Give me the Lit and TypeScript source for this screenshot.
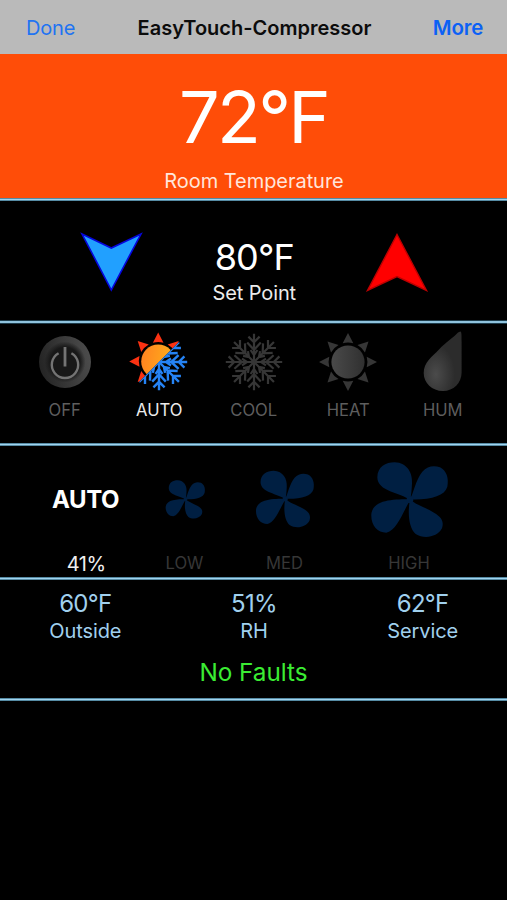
import { LitElement, html, svg, css } from "lit";
import { customElement, property, state } from "lit/decorators.js";
import { classMap } from "lit/directives/class-map.js";

const EIGHTHS = [0, 45, 90, 135, 180, 225, 270, 315];

const snowflake = (color: string, width: number) => svg`
  <g fill="none" stroke=${color} stroke-width=${width}>
    ${EIGHTHS.map((a) => svg`
      <path transform="rotate(${a})" d="M0 0V-28.2M-5.6 -25.4L0 -19.8L5.6 -25.4M-6.8 -19.6L0 -12.2L6.8 -19.600M-3.400 -12L0 -7L3.400 -12"/>`)}
  </g>`;

const sunRays = (color: string, angles: number[]) => angles.map(
  (a) => svg`<path transform="rotate(${a})" fill=${color} d="M0 -29L5.3 -18.7Q0 -20.200 -5.3 -18.7Z"/>`,
);

const icons: Record<string, () => unknown> = {
  off: () => svg`
    <defs>
      <linearGradient id="rim" x1="0" x2="1" y1=".6" y2=".4">
        <stop offset="0" stop-color="#242424"/><stop offset="1" stop-color="#4c4c4c"/>
      </linearGradient>
      <radialGradient id="well">
        <stop offset=".72" stop-color="#181818"/><stop offset="1" stop-color="#181818" stop-opacity="0"/>
      </radialGradient>
    </defs>
    <circle r="26" fill="url(#rim)"/>
    <circle r="20.5" fill="url(#well)"/>
    <path d="M-6.4 -10.8A13.2 13.2 0 1 0 6.4 -10.8" transform="translate(0 2)" fill="none" stroke="#747474" stroke-width="2.4"/>
    <path d="M0 -15V4.5" stroke="#747474" stroke-width="2.8"/>`,
  auto: () => svg`
    <defs>
      <linearGradient id="glow" x1="0" x2="1" y1=".4" y2=".6">
        <stop offset="0" stop-color="#ff8420"/><stop offset=".7" stop-color="#ffa51c"/>
      </linearGradient>
      <clipPath id="warm"><path d="M-32 -32H32L-32 32Z"/></clipPath>
      <clipPath id="cold"><path d="M32 -32V32H-32Z"/></clipPath>
    </defs>
    <g clip-path="url(#warm)">
      <g transform="translate(-.8 -.6)">
        ${sunRays("#fb3212", [0, 45, 225, 270, 315])}
        <circle r="17" fill="url(#glow)"/>
      </g>
    </g>
    <g clip-path="url(#cold)">${snowflake("#2583f5", 2.4)}</g>`,
  cool: () => snowflake("#363636", 2.2),
  heat: () => svg`
    <defs>
      <linearGradient id="disc">
        <stop offset="0" stop-color="#4a4a4a"/><stop offset="1" stop-color="#303030"/>
      </linearGradient>
    </defs>
    ${sunRays("#363636", EIGHTHS)}
    <circle r="16.6" fill="url(#disc)"/>`,
  hum: () => svg`
    <defs>
      <radialGradient id="drop" cx=".32" cy=".72" r=".5">
        <stop offset="0" stop-color="#4b4b4b"/><stop offset="1" stop-color="#2c2c2c"/>
      </radialGradient>
    </defs>
    <path fill="url(#drop)" d="M17.3 -30.5C18.8 -30.5 18.5 -26 18.6 -20L18.6 10.5C18.6 21 10.5 29 0 29C-11 29 -19.3 21 -19.3 11C-19.3 0 -11 -5 -4 -12.5C3 -20 10 -24 15 -29.5Z"/>`,
};

@customElement("mode-button")
class ModeButton extends LitElement {
  @property() name = "";
  @property({ type: Boolean, reflect: true }) active = false;

  static styles = css`
    :host { display: flex; flex-direction: column; align-items: center; color: #5e5e5e; }
    :host([active]) { color: #ececec; }
    .icon { width: 64px; height: 64px; display: block; overflow: visible; }
    .label { font-size: 16.6px; line-height: 20px; margin-top: 6px; }
  `;

  render() {
    return html`
      <svg class="icon" viewBox="-32 -32 64 64">${icons[this.name.toLowerCase()]?.()}</svg>
      <span class="label">${this.name}</span>`;
  }
}

@customElement("fan-button")
class FanButton extends LitElement {
  @property() name = "";
  @property({ type: Number }) size = 80;

  static styles = css`
    :host { display: flex; flex-direction: column; align-items: center; color: #373737; }
    .stage { height: 105px; display: flex; align-items: center; padding-left: 1.5px; }
    .label { font-size: 16.6px; line-height: 20px; margin-top: 1px; }
  `;

  render() {
    return html`
      <div class="stage">
        <svg width=${this.size} height=${this.size} viewBox="388 30 240 240" fill="#001f42">
          <path d="M508 150C480 128 410 125 410 82C411 50 435 37 462 37C500 38 516 70 514 100C513 120 512 138 508 150Z"/>
          <path d="M508 148C518 130 525 90 545 65C560 48 580 45 598 52C618 62 625 85 620 110C612 138 570 150 508 148Z"/>
          <path d="M510 148C460 148 398 148 392 192C390 225 410 248 437 248C470 240 484 190 510 148Z"/>
          <path d="M508 148C500 190 505 235 525 252C550 268 590 262 604 235C610 215 604 202 580 188C550 170 525 165 508 148Z"/>
          <circle cx="508" cy="149" r="10"/>
        </svg>
      </div>
      <span class="label">${this.name}</span>`;
  }
}

@customElement("app-root")
class AppRoot extends LitElement {
  @state() private mode = "AUTO";

  private readonly modes = ["OFF", "AUTO", "COOL", "HEAT", "HUM"];
  private readonly readings = [
    { value: "60°F", label: "Outside" },
    { value: "51%", label: "RH" },
    { value: "62°F", label: "Service" },
  ];

  static styles = css`
    :host {
      display: flex; flex-direction: column; box-sizing: border-box;
      width: 100%; height: 900px; background: #000; color: #fff; overflow: hidden;
      font-family: Inter, "Liberation Sans", sans-serif; font-size: 20px; line-height: 24px;
    }
    header {
      height: 54px; box-sizing: border-box; padding: 2px 24px 0 26px;
      display: grid; grid-template-columns: 1fr auto 1fr; align-items: center;
      background: #bababa; color: #0c0c0c;
    }
    .nav { color: #2173f2; letter-spacing: -.2px; }
    .more { justify-self: end; font-weight: 600; font-size: 20.4px; color: #0c61f5; }
    .title { font-weight: 600; }
    section { box-sizing: border-box; display: flex; flex-direction: column; }
    .rule { height: 3px; flex: none; margin-top: auto; background: linear-gradient(#568ba4 1px, #a0d3ee 1px 2px, #568ba4 2px); }
    .rule.wide { height: 4px; background: linear-gradient(#1d3c4b 1px, #8fc3de 1px 3px, #1d3c4b 3px); }
    .room { height: 147px; background: #ff4d08; text-align: center; padding-top: 23px; }
    .room-temp { font-size: 72px; line-height: 80px; font-weight: 370; letter-spacing: -2.7px; }
    .room-label { margin-top: 12px; padding-left: 1px; color: #ffe6dc; letter-spacing: -.05px; }
    .set { height: 123px; }
    .set-row { display: grid; grid-template-columns: 1fr 114px 1fr; align-items: start; padding-top: 29px; }
    .arrow { width: 64px; height: 64px; display: block; justify-self: center; }
    .lower { margin-left: 26px; }
    .raise { margin-right: 24px; }
    .set-value { text-align: center; padding-left: 1.5px; }
    .set-temp { font-size: 36px; line-height: 40px; margin-top: 7px; font-weight: 380; letter-spacing: -.9px; }
    .set-label { margin-top: 4px; color: #ececec; letter-spacing: -.1px; }
    .modes { height: 122px; }
    .mode-row { display: grid; grid-template-columns: repeat(5, 94.5px); padding: 6px 0 0 17.5px; }
    .fans { height: 134px; }
    .fan-row { display: grid; grid-template-columns: 99px 99px 101px 148px; padding-left: 36px; padding-top: 1px; }
    .fan-auto { display: flex; flex-direction: column; align-items: center; }
    .fan-auto-name { height: 106px; display: flex; align-items: center; font-weight: 700; font-size: 24px; letter-spacing: -.5px; }
    .fan-percent { line-height: 23px; letter-spacing: -.5px; padding-left: 1.5px; color: #f0f0f0; }
    .status { height: 121px; color: #a0d0ee; }
    .readings { display: grid; grid-template-columns: repeat(3, 1fr); text-align: center; padding: 11px 0 0 1px; }
    .value { font-size: 24px; line-height: 26px; letter-spacing: -.7px; }
    .value-label { line-height: 24px; margin-top: 2px; letter-spacing: -.1px; }
    .faults { font-size: 24.3px; line-height: 28px; text-align: center; color: #3bec33; margin-top: 15px; }
  `;

  render() {
    return html`
      <header>
        <span class="nav">Done</span>
        <span class="title">EasyTouch-Compressor</span>
        <span class="nav more">More</span>
      </header>
      <section class="room">
        <div class="room-temp">72°F</div>
        <div class="room-label">Room Temperature</div>
        <div class="rule"></div>
      </section>
      <section class="set">
        <div class="set-row">
          <svg class="arrow lower" viewBox="79 230 64 64">
            <path d="M82 234L111.3 248L141 234L111.3 290Z" fill="#21a0ff" stroke="#0606dc" stroke-width="1.6"/>
          </svg>
          <div class="set-value">
            <div class="set-temp">80°F</div>
            <div class="set-label">Set Point</div>
          </div>
          <svg class="arrow raise" viewBox="365 230 64 64">
            <path d="M397 234.5L426.5 290.5L397 276.5L367.5 290.5Z" fill="#ff0000" stroke="#bd0000" stroke-width="1.4"/>
          </svg>
        </div>
        <div class="rule wide"></div>
      </section>
      <section class="modes">
        <div class="mode-row">
          ${this.modes.map((m) => html`
            <mode-button class=${classMap({ mode: true })} .name=${m} ?active=${m === this.mode}
              @click=${() => (this.mode = m)}></mode-button>`)}
        </div>
        <div class="rule"></div>
      </section>
      <section class="fans">
        <div class="fan-row">
          <div class="fan-auto">
            <span class="fan-auto-name">AUTO</span>
            <span class="fan-percent">41%</span>
          </div>
          <fan-button name="LOW" .size=${41}></fan-button>
          <fan-button name="MED" .size=${60.5}></fan-button>
          <fan-button name="HIGH" .size=${80}></fan-button>
        </div>
        <div class="rule"></div>
      </section>
      <section class="status">
        <div class="readings">
          ${this.readings.map((r) => html`
            <div>
              <div class="value">${r.value}</div>
              <div class="value-label">${r.label}</div>
            </div>`)}
        </div>
        <div class="faults">No Faults</div>
        <div class="rule"></div>
      </section>`;
  }
}
